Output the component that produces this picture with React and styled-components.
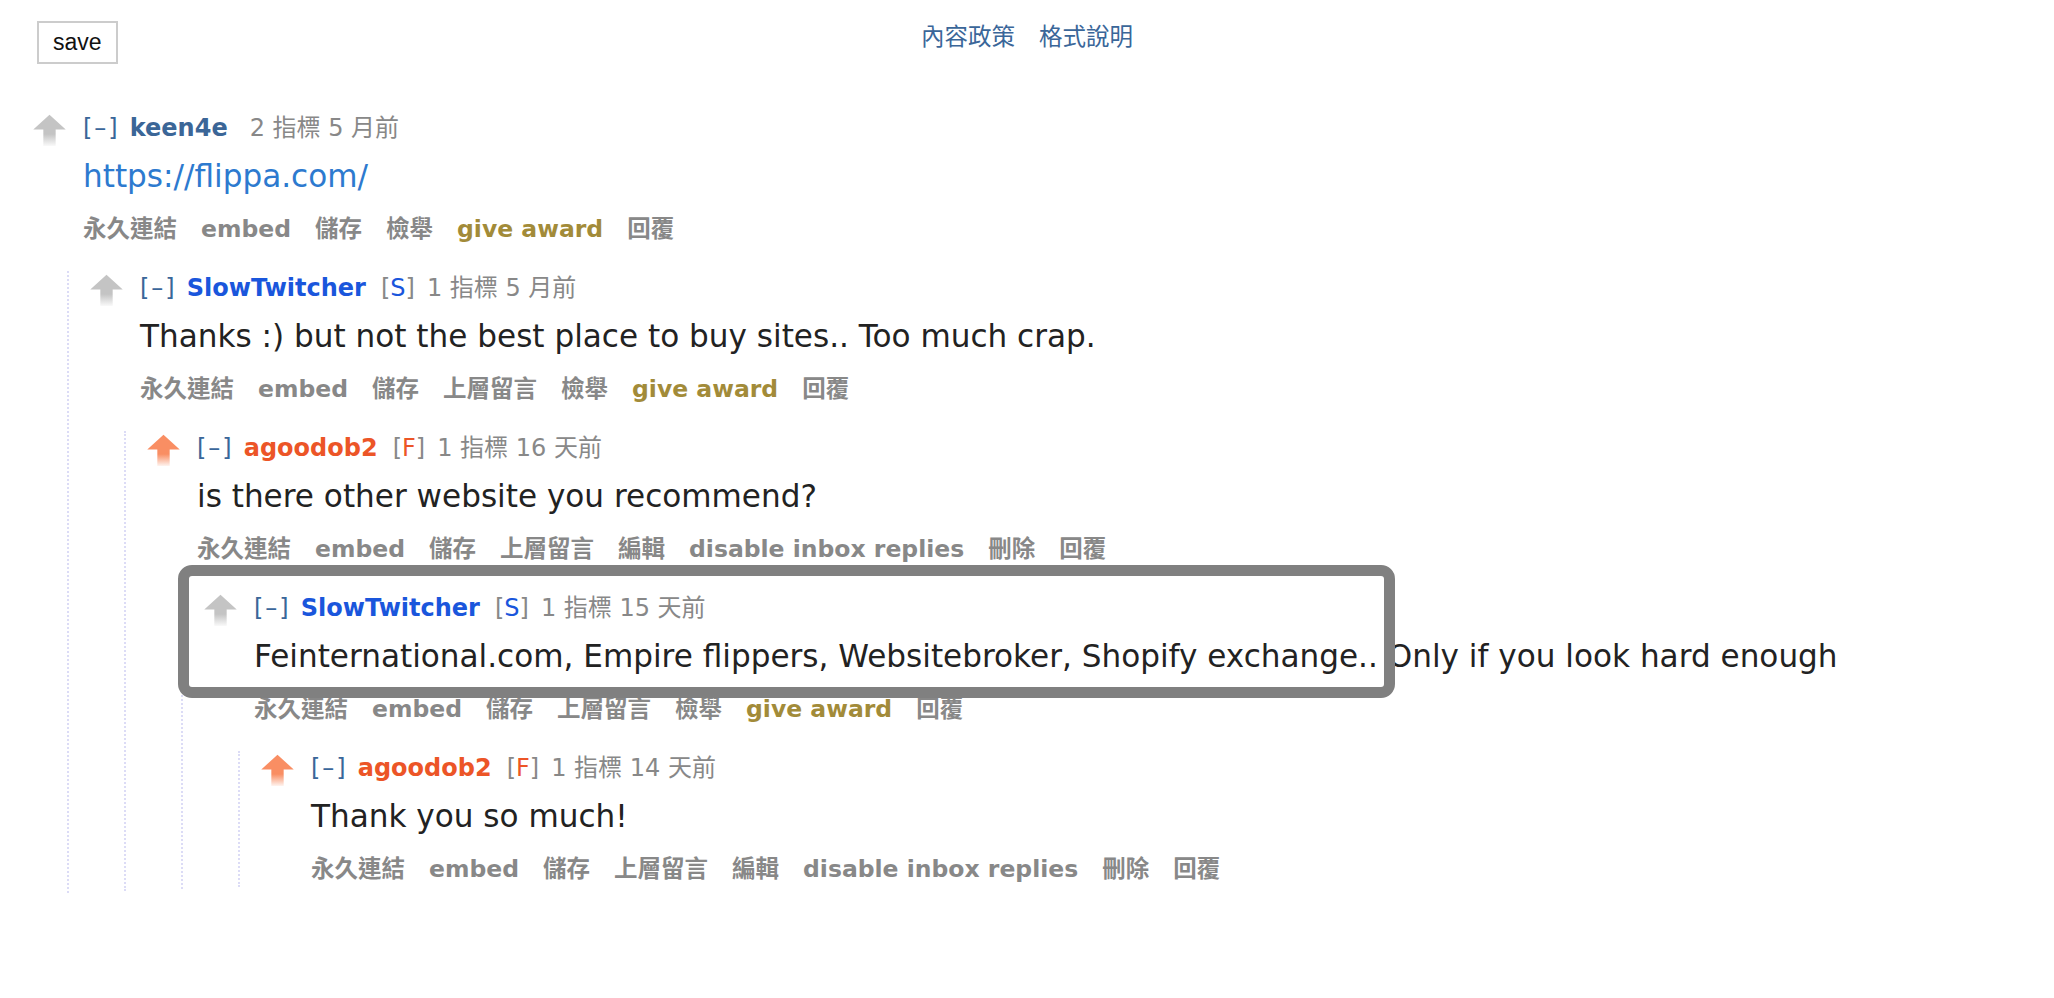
import React from "react";
import styled, { createGlobalStyle } from "styled-components";

const GlobalStyle = createGlobalStyle`
    html, body {
        margin: 0;
        padding: 0;
        background: #ffffff;
    }
    body {
        font-family: "DejaVu Sans", "Noto Sans CJK TC", sans-serif;
        color: #222222;
    }
`

const Page = styled.div`
    padding-bottom: 40px;
`

const TopBar = styled.div`
    display: grid;
    grid-template-columns: 1fr auto 1fr;
    align-items: start;
    padding: 21px 37px 0;
`

const SaveButton = styled.button`
    justify-self: start;
    height: 43px;
    padding: 0 14px;
    background: #ffffff;
    border: 2px solid #cccccc;
    font-family: "Liberation Sans", "Noto Sans CJK TC", sans-serif;
    font-size: 23px;
    color: #111111;
`

const HelpLinks = styled.div`
    display: flex;
    gap: 24px;
    margin-top: 1px;
    line-height: 30px;
    font-size: 23.5px;
`

const HelpLink = styled.a`
    color: #3a6699;
    text-decoration: none;
`

const Thread = styled.div`
    margin-top: 47px;
    padding-left: 34px;
`

const CommentBox = styled.div``

const Row = styled.div`
    position: relative;
    display: flex;
`

const Midcol = styled.div`
    flex: 0 0 49px;
    padding-top: 3px;
    margin-left: -2px;
    margin-right: 2px;
`

const Entry = styled.div`
    flex: 1;
    min-width: 0;
`

const Tagline = styled.div`
    display: flex;
    align-items: baseline;
    padding-top: 1px;
    font-size: 24px;
    line-height: 32px;
    color: #888888;
    white-space: nowrap;
`

const Toggle = styled.span`
    color: #3a6699;
    letter-spacing: 2px;
    margin-right: 10px;
`

const Author = styled.span`
    font-weight: bold;
    color: ${p => p.$color};
    margin-right: ${p => (p.$attrs ? "15px" : "22px")};
`

const Attr = styled.span`
    margin-right: 12px;
    color: #888888;

    b {
        font-weight: normal;
        color: ${p => p.$color};
    }
`

const Body = styled.div`
    margin-top: 12px;
    font-size: 31.1px;
    line-height: 40px;
    color: #222222;
    white-space: nowrap;
`

const BodyLink = styled.a`
    color: #2d7acf;
    text-decoration: none;
`

const Buttons = styled.ul`
    display: flex;
    gap: 24px;
    list-style: none;
    margin: 17px 0 0;
    padding: 0;
    font-size: 23.5px;
    line-height: 32px;
    font-weight: bold;
    white-space: nowrap;
`

const ButtonItem = styled.li`
    color: ${p => (p.$award ? "#a28b39" : "#888888")};
`

const Children = styled.div`
    margin: 26px 0 0 33px;
    padding: 0 0 2px 22px;
    border-left: 2px dotted #dcdcf6;
`

const Highlight = styled.div`
    position: absolute;
    left: -27px;
    top: -26px;
    width: 1217px;
    height: 133px;
    box-sizing: border-box;
    border: 11px solid #808080;
    border-radius: 14px;
    pointer-events: none;
`

function UpArrow({ color, id }) {
    return (
        <svg width="35" height="32" viewBox="0 0 15 14">
            <defs>
                <linearGradient id={id} x1="0" y1="0" x2="0" y2="1">
                    <stop offset="0" stopColor={color} />
                    <stop offset="0.62" stopColor={color} />
                    <stop offset="1" stopColor={color} stopOpacity="0.1" />
                </linearGradient>
            </defs>
            <polygon
                points="7.5,0.3 14.6,6.8 10.2,6.8 10.2,14 4.8,14 4.8,6.8 0.4,6.8"
                fill={`url(#${id})`}
            />
        </svg>
    )
}

const COLORS = {
    plain: "#3b6697",
    submitter: "#1a56dc",
    friend: "#ec5527",
}

const thread = {
    author: "keen4e",
    kind: "plain",
    score: "2 指標 5 月前",
    link: "https://flippa.com/",
    buttons: ["永久連結", "embed", "儲存", "檢舉", "give award", "回覆"],
    child: {
        author: "SlowTwitcher",
        kind: "submitter",
        attr: "S",
        score: "1 指標 5 月前",
        text: "Thanks :) but not the best place to buy sites.. Too much crap.",
        buttons: ["永久連結", "embed", "儲存", "上層留言", "檢舉", "give award", "回覆"],
        child: {
            author: "agoodob2",
            kind: "friend",
            attr: "F",
            upvoted: true,
            score: "1 指標 16 天前",
            text: "is there other website you recommend?",
            buttons: ["永久連結", "embed", "儲存", "上層留言", "編輯", "disable inbox replies", "刪除", "回覆"],
            child: {
                author: "SlowTwitcher",
                kind: "submitter",
                attr: "S",
                highlight: true,
                score: "1 指標 15 天前",
                text: "Feinternational.com, Empire flippers, Websitebroker, Shopify exchange.. Only if you look hard enough",
                buttons: ["永久連結", "embed", "儲存", "上層留言", "檢舉", "give award", "回覆"],
                child: {
                    author: "agoodob2",
                    kind: "friend",
                    attr: "F",
                    upvoted: true,
                    score: "1 指標 14 天前",
                    text: "Thank you so much!",
                    buttons: ["永久連結", "embed", "儲存", "上層留言", "編輯", "disable inbox replies", "刪除", "回覆"],
                },
            },
        },
    },
}

function Comment({ data, depth }) {
    const color = COLORS[data.kind]
    return (
        <CommentBox>
            <Row>
                <Midcol>
                    <UpArrow
                        id={`arrow-${depth}`}
                        color={data.upvoted ? "#f98e63" : "#c4c4c4"}
                    />
                </Midcol>
                <Entry>
                    <Tagline>
                        <Toggle>[–]</Toggle>
                        <Author $color={color} $attrs={!!data.attr}>{data.author}</Author>
                        {data.attr && (
                            <Attr $color={color}>[<b>{data.attr}</b>]</Attr>
                        )}
                        <span>{data.score}</span>
                    </Tagline>
                    <Body>
                        {data.link ? <BodyLink href="#">{data.link}</BodyLink> : data.text}
                    </Body>
                    <Buttons>
                        {data.buttons.map(b => (
                            <ButtonItem key={b} $award={b === "give award"}>{b}</ButtonItem>
                        ))}
                    </Buttons>
                </Entry>
                {data.highlight && <Highlight />}
            </Row>
            {data.child && (
                <Children>
                    <Comment data={data.child} depth={depth + 1} />
                </Children>
            )}
        </CommentBox>
    )
}

export default function App() {
    return (
        <Page>
            <GlobalStyle />
            <TopBar>
                <SaveButton>save</SaveButton>
                <HelpLinks>
                    <HelpLink href="#">內容政策</HelpLink>
                    <HelpLink href="#">格式說明</HelpLink>
                </HelpLinks>
                <div />
            </TopBar>
            <Thread>
                <Comment data={thread} depth={0} />
            </Thread>
        </Page>
    )
}
